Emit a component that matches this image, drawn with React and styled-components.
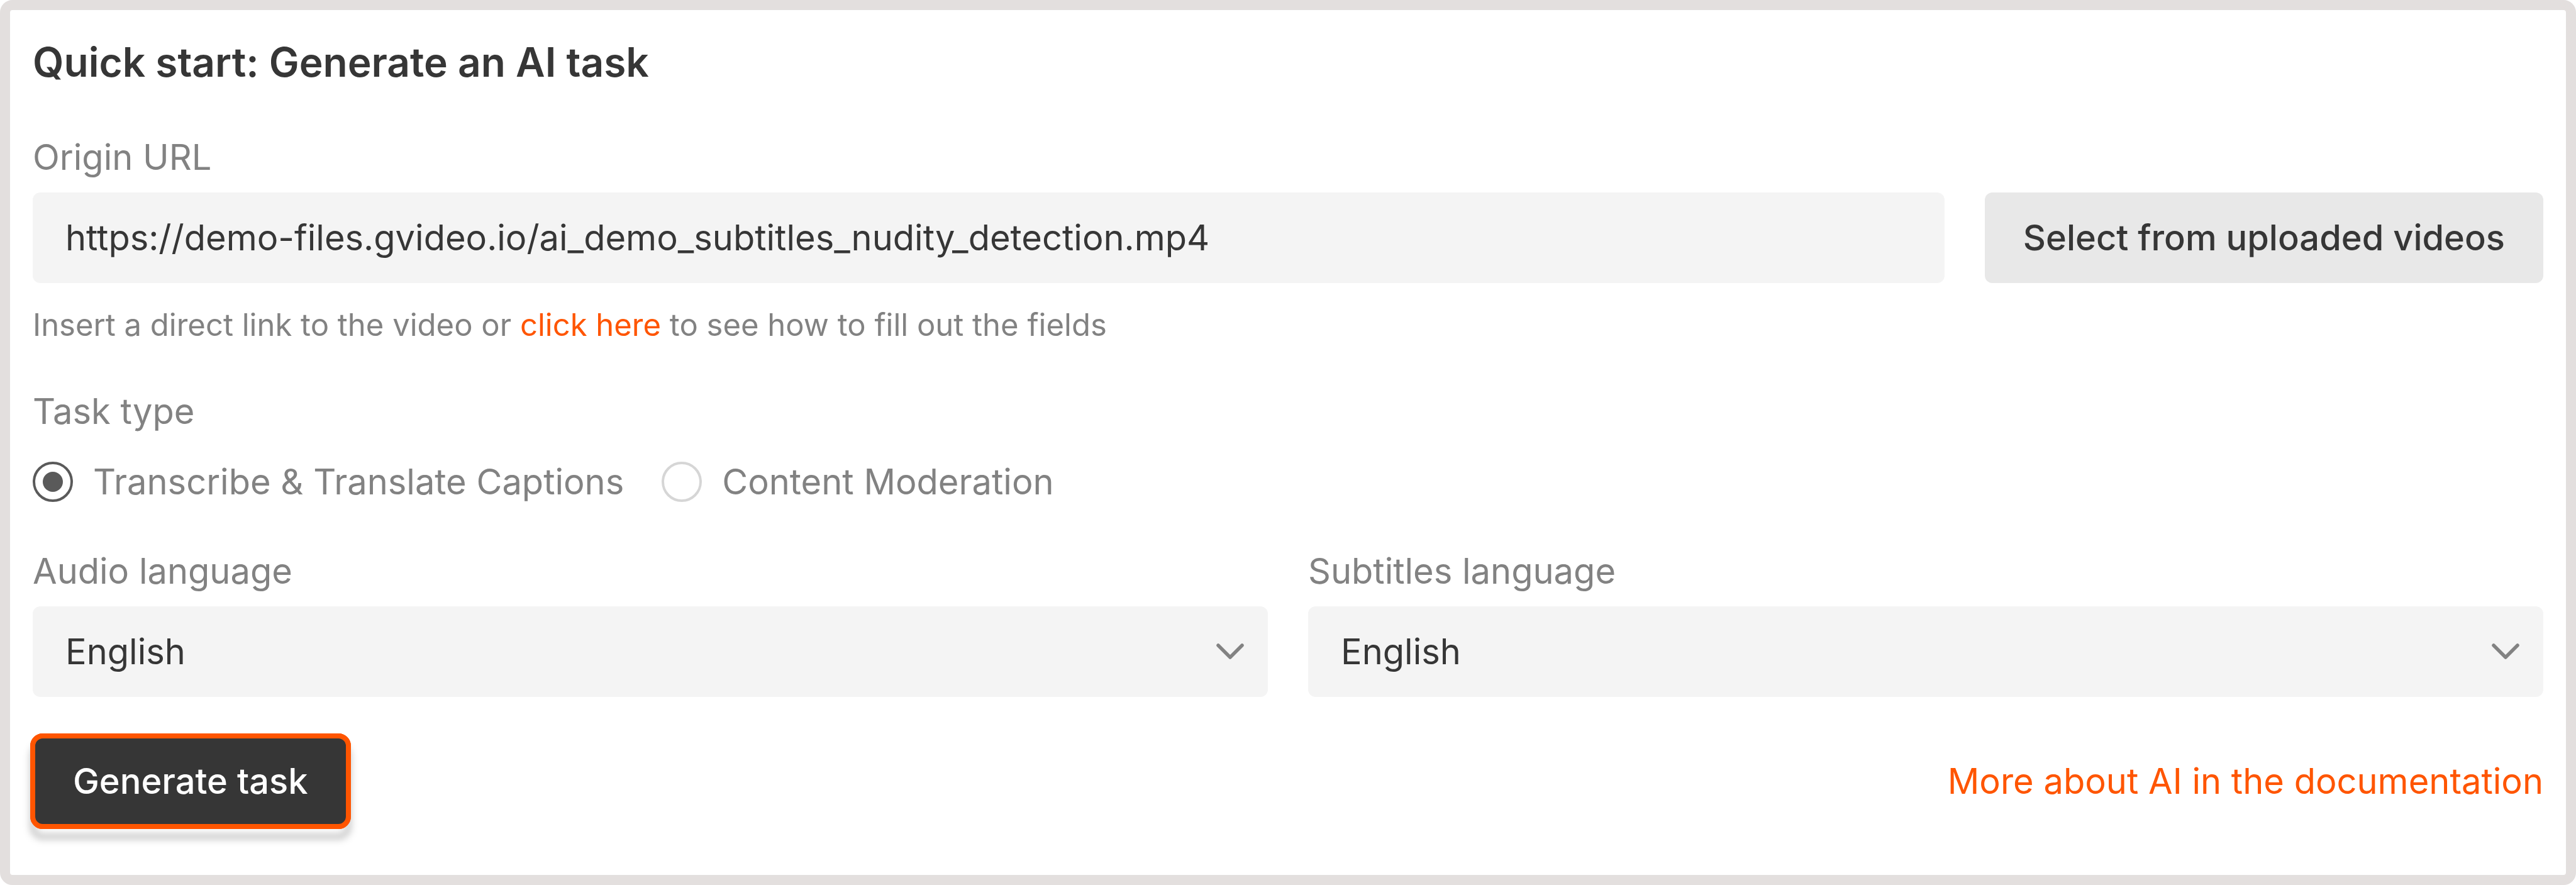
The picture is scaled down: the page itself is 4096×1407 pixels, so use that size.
import React, { useState } from 'react';
import styled, { createGlobalStyle } from 'styled-components';

const color = {
  frame: '#e3dfde',
  text: '#363636',
  muted: '#828282',
  field: '#f4f4f4',
  soft: '#e8e8e8',
  accent: '#ff5500',
};

const GlobalStyle = createGlobalStyle`
  *, *::before, *::after { box-sizing: border-box; }
  body {
    margin: 0;
    background: #ffffff;
    color: ${color.text};
    font-family: Inter, "Liberation Sans", sans-serif;
    font-size: 56px;
    line-height: 80px;
  }
  button, input, select { font: inherit; color: inherit; margin: 0; }
`;

const Card = styled.form`
  display: flex;
  flex-direction: column;
  gap: 62px;
  min-height: 100vh;
  padding: 34px 36px;
  border: 16px solid ${color.frame};
  border-radius: 20px;
  background: #ffffff;
`;

const Title = styled.h1`
  margin: 0;
  font-size: 64px;
  line-height: 98px;
  font-weight: 600;
`;

const Field = styled.div`
  display: flex;
  flex-direction: column;
  gap: 16px;
  flex: 1 1 0;
  min-width: 0;
`;

const FullField = styled(Field)`
  flex: none;
`;

const Label = styled.label`
  color: ${color.muted};
`;

const Row = styled.div`
  display: flex;
  align-items: center;
  gap: 64px;
`;

const TextInput = styled.input`
  flex: 1;
  min-width: 0;
  height: 144px;
  padding: 0 52px;
  border: 0;
  border-radius: 12px;
  background: ${color.field};
`;

const Button = styled.button`
  flex: none;
  height: 144px;
  padding: 0 ${(p) => (p.$primary ? 64 : 61)}px;
  border: 0;
  border-radius: 12px;
  font-weight: 500;
  white-space: nowrap;
  cursor: pointer;
  color: ${(p) => (p.$primary ? '#ffffff' : color.text)};
  background: ${(p) => (p.$primary ? color.text : color.soft)};
`;

/* Draws an outline over the edge of its child, and the outline's shadow behind it. */
const Highlight = styled.div`
  position: relative;
  display: flex;
  isolation: isolate;

  &::before,
  &::after {
    content: '';
    position: absolute;
    inset: -4px;
    border: 8px solid ${color.accent};
    border-radius: 20px;
    pointer-events: none;
  }
  &::before {
    z-index: -1;
    filter: drop-shadow(0 16px 6px rgba(0, 0, 0, 0.25));
  }
`;

const Hint = styled.p`
  margin: 16px 0 0;
  font-size: 49px;
  line-height: 70px;
  color: ${color.muted};
`;

const Link = styled.a`
  color: ${color.accent};
  text-decoration: none;
`;

const RadioGroup = styled.fieldset`
  display: flex;
  flex-wrap: wrap;
  column-gap: 60px;
  margin: 0;
  padding: 0;
  border: 0;
  color: ${color.muted};
`;

const Legend = styled.legend`
  padding: 0;
  margin-bottom: 32px;
`;

const RadioLabel = styled.label`
  display: flex;
  align-items: center;
  gap: 32px;
  cursor: pointer;
`;

const Radio = styled.input`
  appearance: none;
  flex: none;
  display: grid;
  place-items: center;
  width: 64px;
  height: 64px;
  border: 4px solid #d6d6d6;
  border-radius: 50%;
  background: #ffffff;

  &:checked { border-color: #5a5a5a; }
  &:checked::before {
    content: '';
    width: 32px;
    height: 32px;
    border-radius: 50%;
    background: #5a5a5a;
  }
`;

const SelectBox = styled.div`
  display: grid;
  align-items: center;
  & > * { grid-area: 1 / 1; }
`;

const Select = styled.select`
  appearance: none;
  width: 100%;
  height: 144px;
  padding: 0 128px 0 52px;
  border: 0;
  border-radius: 12px;
  background: ${color.field};
`;

const ChevronIcon = styled.svg`
  justify-self: end;
  width: 64px;
  height: 64px;
  margin-right: 28px;
  fill: none;
  stroke: ${color.muted};
  stroke-width: 5.5;
  stroke-linecap: round;
  stroke-linejoin: round;
  pointer-events: none;
`;

const Footer = styled.div`
  display: flex;
  align-items: center;
  justify-content: space-between;
  padding-bottom: 43px;
`;

function LanguageSelect({ id, label }) {
  return (
    <Field>
      <Label htmlFor={id}>{label}</Label>
      <SelectBox>
        <Select id={id} defaultValue="en">
          <option value="en">English</option>
        </Select>
        <ChevronIcon viewBox="0 0 64 64" aria-hidden="true">
          <path d="M13 22 32 41 51 22" />
        </ChevronIcon>
      </SelectBox>
    </Field>
  );
}

const TASKS = [
  { value: 'captions', label: 'Transcribe & Translate Captions' },
  { value: 'moderation', label: 'Content Moderation' },
];

export default function App() {
  const [url, setUrl] = useState('https://demo-files.gvideo.io/ai_demo_subtitles_nudity_detection.mp4');
  const [task, setTask] = useState('captions');

  return (
    <>
      <GlobalStyle />
      <Card onSubmit={(e) => e.preventDefault()}>
        <Title>Quick start: Generate an AI task</Title>
        <FullField>
          <Label htmlFor="origin">Origin URL</Label>
          <Row>
            <TextInput id="origin" type="text" value={url} onChange={(e) => setUrl(e.target.value)} />
            <Button type="button">Select from uploaded videos</Button>
          </Row>
          <Hint>
            Insert a direct link to the video or <Link href="#help">click here</Link> to see how to fill out the fields
          </Hint>
        </FullField>
        <RadioGroup>
          <Legend>Task type</Legend>
          {TASKS.map(({ value, label }) => (
            <RadioLabel key={value}>
              <Radio
                type="radio"
                name="task"
                value={value}
                checked={task === value}
                onChange={() => setTask(value)}
              />
              {label}
            </RadioLabel>
          ))}
        </RadioGroup>
        <Row>
          <LanguageSelect id="audio" label="Audio language" />
          <LanguageSelect id="subtitles" label="Subtitles language" />
        </Row>
        <Footer>
          <Highlight>
            <Button type="submit" $primary>Generate task</Button>
          </Highlight>
          <Link href="#docs">More about AI in the documentation</Link>
        </Footer>
      </Card>
    </>
  );
}
